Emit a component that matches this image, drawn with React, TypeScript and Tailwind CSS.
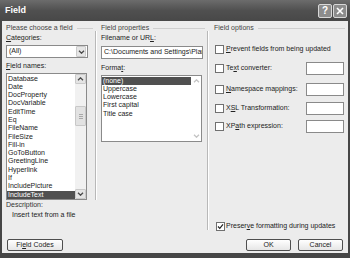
import React from 'react'

const fieldNames = [
  'Database', 'Date', 'DocProperty', 'DocVariable', 'EditTime', 'Eq', 'FileName', 'FileSize',
  'Fill-in', 'GoToButton', 'GreetingLine', 'Hyperlink', 'If', 'IncludePicture', 'IncludeText',
]
const formats = ['(none)', 'Uppercase', 'Lowercase', 'First capital', 'Title case']

const U: React.FC<{ children: React.ReactNode }> = ({ children }) => (
  <span className="underline">{children}</span>
)

const Chevron: React.FC<{ up?: boolean; color?: string }> = ({ up, color = '#4a4a4a' }) => (
  <svg viewBox="0 0 7 4" className="w-[7px] h-[4px]">
    <path d={up ? 'M1 3.3 L3.5 0.8 L6 3.3' : 'M1 0.7 L3.5 3.2 L6 0.7'} stroke={color} strokeWidth="1.3" fill="none" />
  </svg>
)

const GroupHeader: React.FC<{ label: string }> = ({ label }) => (
  <div className="flex items-center h-[10px] gap-[4px]">
    <span className="whitespace-nowrap text-[#444]">{label}</span>
    <div className="flex-1 border-t border-[#cfcfcf]" />
  </div>
)

const Check: React.FC<{ checked?: boolean }> = ({ checked }) => (
  <div className="w-[9px] h-[9px] border border-[#707070] bg-white flex items-center justify-center shrink-0">
    {checked && (
      <svg viewBox="0 0 7 7" className="w-[7px] h-[7px]">
        <path d="M1 3.5 L2.8 5.4 L6 1.4" stroke="#222" strokeWidth="1.2" fill="none" />
      </svg>
    )}
  </div>
)

const ArrowBtn: React.FC<{ up?: boolean }> = ({ up }) => (
  <div className="h-[10px] w-full bg-[#e4e4e4] border border-[#cacaca] rounded-[1px] flex items-center justify-center">
    <Chevron up={up} />
  </div>
)

const OptionRow: React.FC<{ label: React.ReactNode; input?: boolean; className?: string }> = ({ label, input, className }) => (
  <div className={`flex items-center h-[13px] ${className ?? ''}`}>
    <div className="ml-[1px]">
      <Check />
    </div>
    <span className="ml-[2px] whitespace-nowrap">{label}</span>
    {input && <div className="ml-auto mr-[1px] w-[38px] h-[13px] bg-white border border-[#8a8a8a]" />}
  </div>
)

const Button: React.FC<{ children: React.ReactNode; className?: string }> = ({ children, className }) => (
  <div
    className={`h-[12px] flex items-center justify-center border border-[#4e4e4e] rounded-[2px] bg-linear-to-b from-[#ffffff] to-[#e6e6e6] ${className ?? ''}`}
  >
    {children}
  </div>
)

const App: React.FC = () => {
  return (
    <div className="w-[350px] h-[258px] bg-[#464646] flex flex-col font-['Liberation_Sans',Arial,sans-serif] text-[7px] text-[#222] overflow-hidden">
      {/* Title bar */}
      <div className="h-[21px] shrink-0 flex items-center bg-linear-to-b from-[#6c6c6c] via-[#505050] to-[#484848]">
        <span className="ml-[5px] text-[9px] font-bold text-white">Field</span>
        <div className="ml-auto mr-[3px] flex gap-[1px]">
          <div className="w-[14px] h-[14px] rounded-[2px] border border-[#d8d8d8] bg-[#8c8c8c] flex items-center justify-center text-white text-[10px] font-bold leading-none">
            ?
          </div>
          <div className="w-[14px] h-[14px] rounded-[2px] border border-[#d8d8d8] bg-[#8c8c8c] flex items-center justify-center">
            <svg viewBox="0 0 8 8" className="w-[8px] h-[8px]">
              <path d="M1 1 L7 7 M7 1 L1 7" stroke="#fff" strokeWidth="1.6" />
            </svg>
          </div>
        </div>
      </div>

      {/* Body */}
      <div className="mx-[2px] mb-[5px] flex-1 bg-[#ececec] flex flex-col">
        <div className="h-[216px] flex items-start pt-[2px]">
          {/* Please choose a field */}
          <div className="ml-[4px] w-[87px] flex flex-col">
            <GroupHeader label="Please choose a field" />
            <div className="h-[10px] leading-[10px]">
              <U>C</U>ategories:
            </div>
            <div className="mt-[2px] w-[82px] h-[13px] bg-white border border-[#8a8a8a] flex items-center">
              <span className="ml-[2px]">(All)</span>
              <div className="ml-auto mr-[1px] w-[10px] h-[11px] bg-[#e6e6e6] border border-[#cacaca] rounded-[1px] flex items-center justify-center">
                <Chevron />
              </div>
            </div>
            <div className="mt-[3px] h-[10px] leading-[10px]">
              <U>F</U>ield names:
            </div>
            <div className="mt-[2px] w-[81px] h-[127px] bg-white border border-[#8a8a8a] flex">
              <div className="flex-1 flex flex-col pt-[0.5px] overflow-hidden">
                {fieldNames.map((name) => (
                  <div
                    key={name}
                    className={`h-[8.3px] leading-[8.3px] pl-[1px] whitespace-nowrap ${
                      name === 'IncludeText' ? 'bg-[#505050] text-white' : ''
                    }`}
                  >
                    {name}
                  </div>
                ))}
              </div>
              <div className="w-[11px] flex flex-col bg-[#f1f1f1]">
                <ArrowBtn up />
                <div className="mt-[22px] h-[20px] bg-[#e2e2e2] border border-[#c8c8c8] rounded-[1px] flex flex-col items-center justify-center gap-[1px]">
                  <div className="w-[4px] border-t border-[#a8a8a8]" />
                  <div className="w-[4px] border-t border-[#a8a8a8]" />
                  <div className="w-[4px] border-t border-[#a8a8a8]" />
                </div>
                <div className="flex-1" />
                <ArrowBtn />
              </div>
            </div>
            <div className="h-[9px] leading-[9px] text-[#333]">Description:</div>
            <div className="mt-[1px] ml-[6px] h-[9px] leading-[9px]">Insert text from a file</div>
          </div>

          {/* separator */}
          <div className="ml-[2px] mt-[8px] w-[2px] h-[169px] border-l border-[#b8b8b8] border-r border-r-white" />

          {/* Field properties */}
          <div className="ml-[4px] w-[104px] flex flex-col">
            <GroupHeader label="Field properties" />
            <div className="h-[10px] leading-[10px]">
              Filename or UR<U>L</U>:
            </div>
            <div className="mt-[3px] w-[102px] h-[13px] bg-white border border-[#8a8a8a] flex items-center overflow-hidden">
              <span className="ml-[2px] whitespace-nowrap">C:\Documents and Settings\Plar</span>
            </div>
            <div className="mt-[4px] h-[10px] leading-[10px]">
              Forma<U>t</U>:
            </div>
            <div className="mt-[2px] w-[101px] h-[67px] bg-white border border-[#8a8a8a] flex">
              <div className="flex-1 flex flex-col pt-[0.5px]">
                {formats.map((f) => (
                  <div
                    key={f}
                    className={`h-[8.3px] leading-[8.3px] pl-[1px] whitespace-nowrap ${
                      f === '(none)' ? 'bg-[#505050] text-white' : ''
                    }`}
                  >
                    {f}
                  </div>
                ))}
              </div>
              <div className="w-[10px] flex flex-col items-center justify-between py-[3px]">
                <Chevron up color="#c4c4c4" />
                <Chevron color="#c4c4c4" />
              </div>
            </div>
          </div>

          {/* separator */}
          <div className="ml-[2px] mt-[8px] w-[2px] h-[199px] border-l border-[#b8b8b8] border-r border-r-white" />

          {/* Field options */}
          <div className="ml-[5px] w-[131px] flex flex-col">
            <GroupHeader label="Field options" />
            <OptionRow className="mt-[10px]" label={<><U>P</U>revent fields from being updated</>} />
            <OptionRow className="mt-[6px]" input label={<>Te<U>x</U>t converter:</>} />
            <OptionRow className="mt-[8px]" input label={<><U>N</U>amespace mappings:</>} />
            <OptionRow className="mt-[6px]" input label={<>X<U>S</U>L Transformation:</>} />
            <OptionRow className="mt-[5px]" input label={<>XP<U>a</U>th expression:</>} />
            <div className="mt-[87px] flex items-center h-[13px]">
              <div className="ml-[2px]">
                <Check checked />
              </div>
              <span className="ml-[1px] whitespace-nowrap">
                Preser<U>v</U>e formatting during updates
              </span>
            </div>
          </div>
        </div>

        {/* Buttons */}
        <div className="mt-[2px] flex items-center">
          <Button className="ml-[5px] w-[56px]">
            Fi<U>e</U>ld Codes
          </Button>
          <Button className="ml-auto w-[45px]">OK</Button>
          <Button className="ml-[7px] mr-[5px] w-[45px]">Cancel</Button>
        </div>
      </div>
    </div>
  )
}

export default App
